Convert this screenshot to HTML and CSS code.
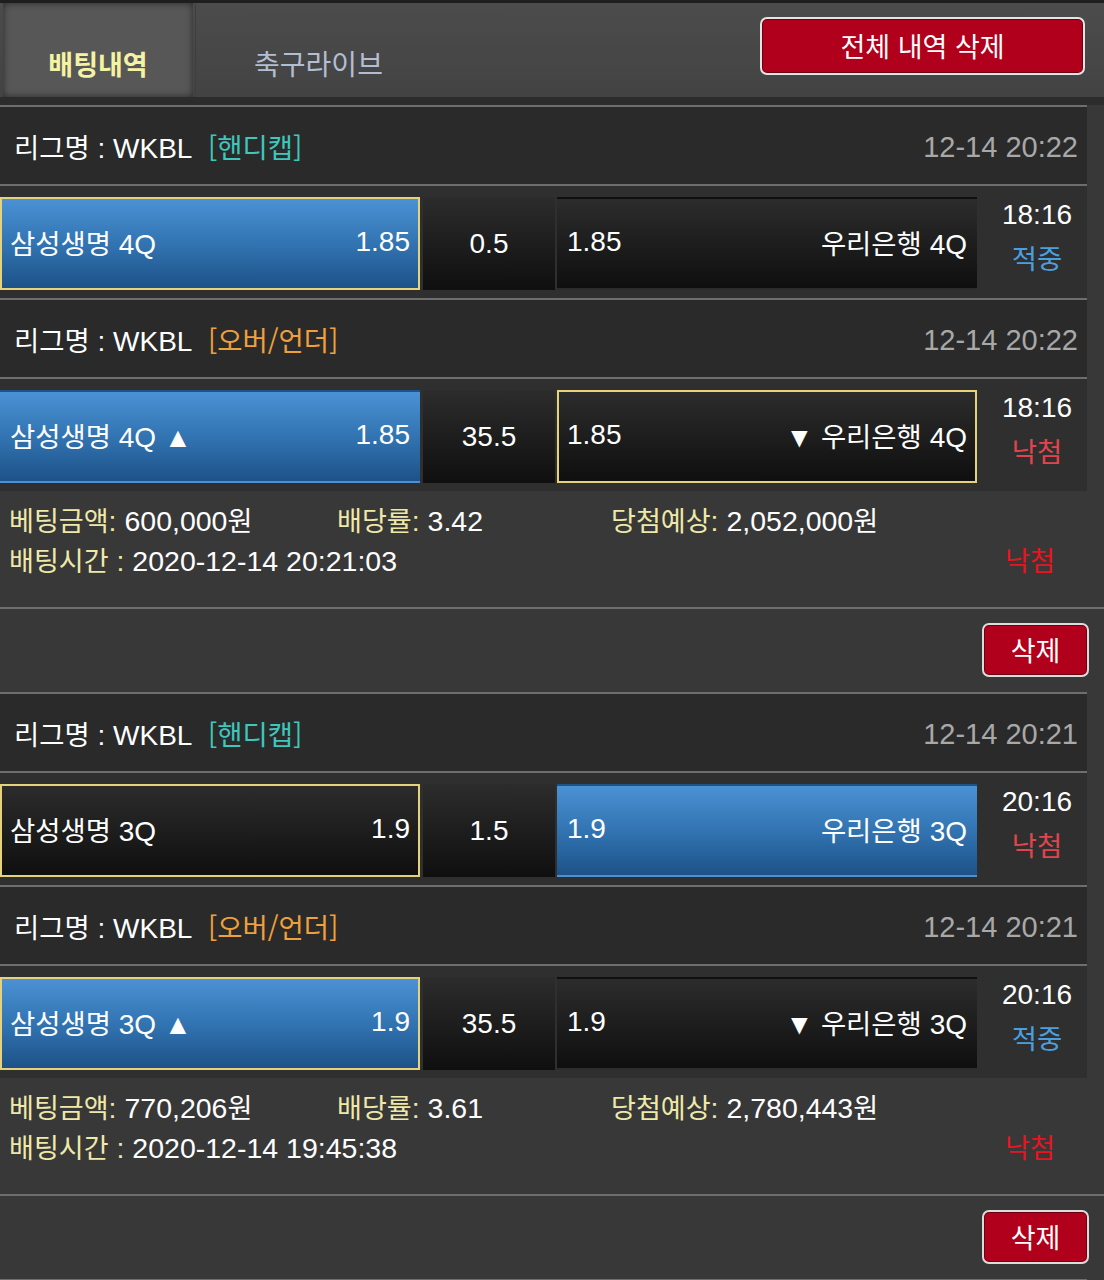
FILE: index.html
```html
<!DOCTYPE html>
<html lang="ko">
<head>
<meta charset="utf-8">
<title>배팅내역</title>
<link rel="stylesheet" href="styles.css">
</head>
<body>
<div class="nav">
  <div class="tab active">배팅내역</div>
  <div class="tab">축구라이브</div>
  <div class="nav-space"></div>
  <button class="btn-all">전체 내역 삭제</button>
</div>
<div class="rule"></div>

<section class="slip">
  <div class="league">
    <div><span class="k">리그명</span> : WKBL&nbsp; <span class="k hc">[핸디캡]</span></div>
    <div class="date">12-14 20:22</div>
  </div>
  <div class="rule"></div>
  <div class="match">
    <div class="pick blue sel"><span><span class="k">삼성생명</span> 4Q</span><span>1.85</span></div>
    <div class="mid">0.5</div>
    <div class="pick"><span>1.85</span><span><span class="k">우리은행</span> 4Q</span></div>
    <div class="time"><span>18:16</span><span class="k win">적중</span></div>
  </div>
  <div class="rule"></div>
  <div class="league">
    <div><span class="k">리그명</span> : WKBL&nbsp; <span class="k ou">[오버/언더]</span></div>
    <div class="date">12-14 20:22</div>
  </div>
  <div class="rule"></div>
  <div class="match">
    <div class="pick blue"><span><span class="k">삼성생명</span> 4Q ▲</span><span>1.85</span></div>
    <div class="mid">35.5</div>
    <div class="pick sel"><span>1.85</span><span>▼ <span class="k">우리은행</span> 4Q</span></div>
    <div class="time"><span>18:16</span><span class="k lose">낙첨</span></div>
  </div>
  <div class="info">
    <div><span class="k lbl">베팅금액</span><span class="lbl">:</span> 600,000<span class="k">원</span></div>
    <div><span class="k lbl">배당률</span><span class="lbl">:</span> 3.42</div>
    <div><span class="k lbl">당첨예상</span><span class="lbl">:</span> 2,052,000<span class="k">원</span></div>
    <div></div>
    <div class="span3"><span class="k lbl">배팅시간</span><span class="lbl"> :</span> 2020-12-14 20:21:03</div>
    <div class="k status">낙첨</div>
  </div>
  <div class="rule full"></div>
  <div class="actions"><button class="btn-del">삭제</button></div>
  <div class="rule"></div>
</section>

<section class="slip">
  <div class="league">
    <div><span class="k">리그명</span> : WKBL&nbsp; <span class="k hc">[핸디캡]</span></div>
    <div class="date">12-14 20:21</div>
  </div>
  <div class="rule"></div>
  <div class="match">
    <div class="pick sel"><span><span class="k">삼성생명</span> 3Q</span><span>1.9</span></div>
    <div class="mid">1.5</div>
    <div class="pick blue"><span>1.9</span><span><span class="k">우리은행</span> 3Q</span></div>
    <div class="time"><span>20:16</span><span class="k lose">낙첨</span></div>
  </div>
  <div class="rule"></div>
  <div class="league">
    <div><span class="k">리그명</span> : WKBL&nbsp; <span class="k ou">[오버/언더]</span></div>
    <div class="date">12-14 20:21</div>
  </div>
  <div class="rule"></div>
  <div class="match">
    <div class="pick blue sel"><span><span class="k">삼성생명</span> 3Q ▲</span><span>1.9</span></div>
    <div class="mid">35.5</div>
    <div class="pick"><span>1.9</span><span>▼ <span class="k">우리은행</span> 3Q</span></div>
    <div class="time"><span>20:16</span><span class="k win">적중</span></div>
  </div>
  <div class="info">
    <div><span class="k lbl">베팅금액</span><span class="lbl">:</span> 770,206<span class="k">원</span></div>
    <div><span class="k lbl">배당률</span><span class="lbl">:</span> 3.61</div>
    <div><span class="k lbl">당첨예상</span><span class="lbl">:</span> 2,780,443<span class="k">원</span></div>
    <div></div>
    <div class="span3"><span class="k lbl">배팅시간</span><span class="lbl"> :</span> 2020-12-14 19:45:38</div>
    <div class="k status">낙첨</div>
  </div>
  <div class="rule full"></div>
  <div class="actions"><button class="btn-del">삭제</button></div>
  <div class="rule"></div>
</section>
</body>
</html>
```

FILE: styles.css
```css
* { box-sizing: border-box; }
html, body { margin: 0; padding: 0; background: #383838; }
body {
  width: 1104px;
  font-family: "Liberation Sans", "Noto Sans CJK KR", sans-serif;
  font-size: 28px;
  color: #fff;
}
.k { font-family: "Noto Sans CJK KR", sans-serif; font-size: 0.98em; }

/* top navigation */
.nav {
  height: 105px;
  display: flex;
  align-items: flex-start;
  padding-top: 3px;
  background: linear-gradient(#4c4c4c, #434343);
  border-bottom: 8px solid #2c2c2c;
  box-shadow: inset 0 3px 0 #1e1e1e;
}
.tab {
  height: 94px;
  width: 246px;
  margin-left: 2px;
  display: flex;
  align-items: center;
  justify-content: center;
  padding-top: 26px;
  font-family: "Noto Sans CJK KR", sans-serif;
  font-size: 28px;
  color: #b3bed2;
  border-left: 1px solid #3e3e3e;
}
.tab.active {
  width: 190px;
  margin-left: 3px;
  background: #575757;
  color: #f4f3a4;
  font-weight: 700;
  font-size: 27px;
  border-left: 0;
  box-shadow: inset 0 0 7px rgba(0, 0, 0, 0.55);
}
.nav-space { flex: 1; }
.btn-all {
  margin-top: 14px;
  margin-right: 19px;
  width: 325px;
  height: 58px;
  border: 2px solid #e4e4e4;
  border-radius: 7px;
  background: #b1001b;
  box-shadow: inset 0 0 0 1px #6e0012;
  color: #fff;
  font-family: "Noto Sans CJK KR", sans-serif;
  font-size: 27px;
  padding: 0 0 2px;
}

.rule { height: 2px; width: 1087px; background: #6e6e6e; }
.rule.full { width: 1104px; }

/* league header */
.league {
  width: 1087px;
  height: 77px;
  background: #2a2a2a;
  display: flex;
  align-items: center;
  justify-content: space-between;
  padding: 0 9px 0 14px;
}
.hc { color: #3fc6bd; }
.ou { color: #efa03c; }
.date { color: #a8a8a8; font-size: 29px; padding-top: 3px; }

/* match row */
.match {
  width: 1087px;
  height: 112px;
  padding: 11px 0 8px;
  background: #2f2f2f;
  display: flex;
}
.pick {
  width: 420px;
  height: 93px;
  display: flex;
  align-items: center;
  justify-content: space-between;
  padding: 0 8px 4px 8px;
  border: 2px solid transparent;
  background: linear-gradient(#2c2c2c, #0f0f0f);
}
.pick.blue { background: linear-gradient(#4b91d4, #3274b2 50%, #1d5288); }
.pick.sel { border-color: #e7d27c; }
.mid {
  width: 132px;
  height: 93px;
  margin: 0 2px 0 3px;
  display: flex;
  align-items: center;
  justify-content: center;
  padding-top: 1px;
  background: linear-gradient(#2c2c2c, #0f0f0f);
}
.time {
  width: 110px;
  display: flex;
  flex-direction: column;
  align-items: center;
  justify-content: center;
  line-height: 42px;
  padding: 0 0 16px 10px;
}
.win { color: #4c9fdf; }
.lose { color: #e2444e; }

/* info area */
.info {
  width: 1087px;
  height: 116px;
  padding: 8px 0 0 9px;
  display: grid;
  grid-template-columns: 328px 274px 366px 110px;
  grid-auto-rows: 40px;
  align-items: center;
  font-size: 28.5px;
}
.info .k { font-size: 0.95em; }
.lbl { color: #efe9a9; }
.span3 { grid-column: span 3; }
.status { color: #e8141f; text-align: center; padding-right: 4px; }

/* actions */
.actions {
  height: 83px;
  display: flex;
  justify-content: flex-end;
  padding: 14px 15px 0 0;
}
.btn-del {
  width: 107px;
  height: 54px;
  border: 2px solid #dcdcdc;
  border-radius: 7px;
  background: #b1001b;
  box-shadow: inset 0 0 0 1px #6e0012;
  color: #fff;
  font-family: "Noto Sans CJK KR", sans-serif;
  font-size: 27px;
  padding: 0 0 2px;
}
```
